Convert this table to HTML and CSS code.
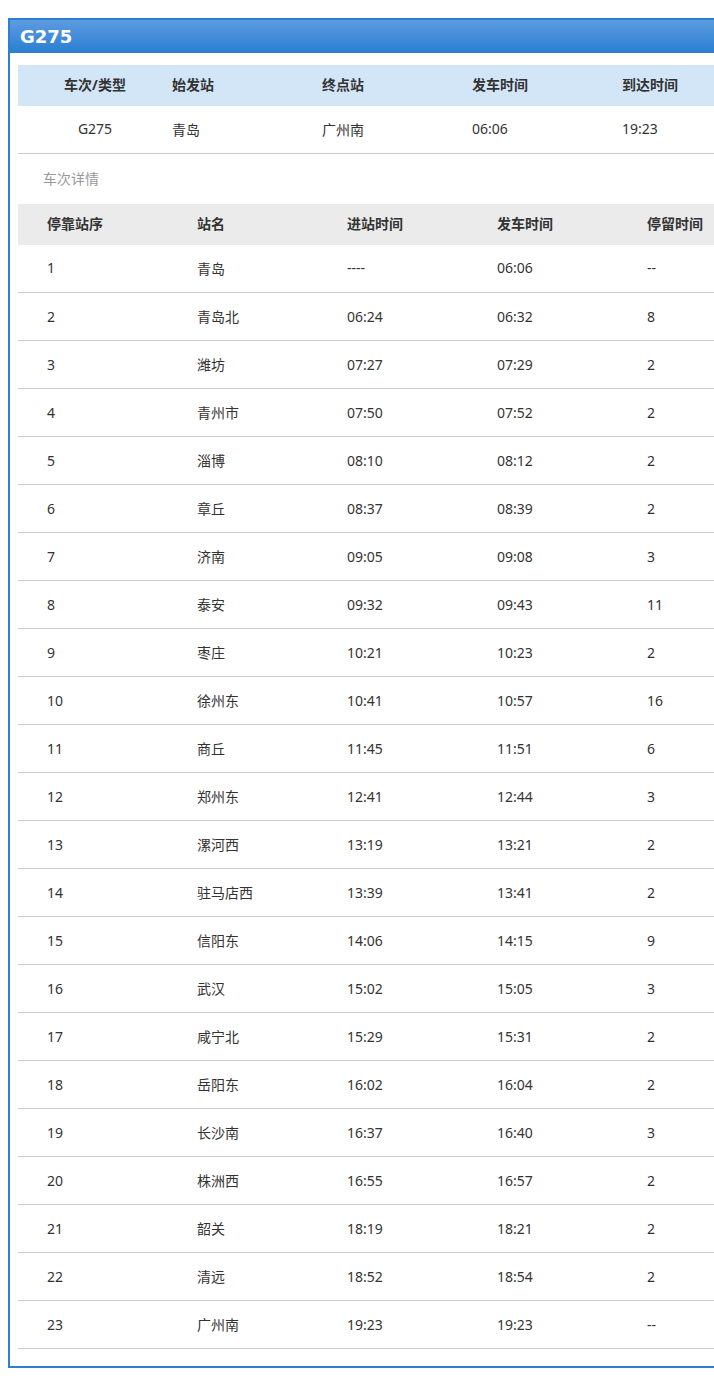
FILE: index.html
```html
<!DOCTYPE html>
<html lang="zh-CN">
<head>
<meta charset="UTF-8"/>
<title>G275 时刻表</title>
<link rel="stylesheet" href="styles.css">
</head>
<body>
<div class="panel">
  <div class="panel-hd">G275</div>
  <div class="panel-bd">
    <table class="info">
      <thead>
        <tr><th class="c1">车次/类型</th><th>始发站</th><th>终点站</th><th>发车时间</th><th>到达时间</th></tr>
      </thead>
      <tbody>
        <tr><td class="c1">G275</td><td>青岛</td><td>广州南</td><td>06:06</td><td>19:23</td></tr>
      </tbody>
    </table>
    <p class="label">车次详情</p>
    <table class="stops">
      <thead>
        <tr><th>停靠站序</th><th>站名</th><th>进站时间</th><th>发车时间</th><th>停留时间</th></tr>
      </thead>
      <tbody>
        <tr><td>1</td><td>青岛</td><td>----</td><td>06:06</td><td>--</td></tr>
        <tr><td>2</td><td>青岛北</td><td>06:24</td><td>06:32</td><td>8</td></tr>
        <tr><td>3</td><td>潍坊</td><td>07:27</td><td>07:29</td><td>2</td></tr>
        <tr><td>4</td><td>青州市</td><td>07:50</td><td>07:52</td><td>2</td></tr>
        <tr><td>5</td><td>淄博</td><td>08:10</td><td>08:12</td><td>2</td></tr>
        <tr><td>6</td><td>章丘</td><td>08:37</td><td>08:39</td><td>2</td></tr>
        <tr><td>7</td><td>济南</td><td>09:05</td><td>09:08</td><td>3</td></tr>
        <tr><td>8</td><td>泰安</td><td>09:32</td><td>09:43</td><td>11</td></tr>
        <tr><td>9</td><td>枣庄</td><td>10:21</td><td>10:23</td><td>2</td></tr>
        <tr><td>10</td><td>徐州东</td><td>10:41</td><td>10:57</td><td>16</td></tr>
        <tr><td>11</td><td>商丘</td><td>11:45</td><td>11:51</td><td>6</td></tr>
        <tr><td>12</td><td>郑州东</td><td>12:41</td><td>12:44</td><td>3</td></tr>
        <tr><td>13</td><td>漯河西</td><td>13:19</td><td>13:21</td><td>2</td></tr>
        <tr><td>14</td><td>驻马店西</td><td>13:39</td><td>13:41</td><td>2</td></tr>
        <tr><td>15</td><td>信阳东</td><td>14:06</td><td>14:15</td><td>9</td></tr>
        <tr><td>16</td><td>武汉</td><td>15:02</td><td>15:05</td><td>3</td></tr>
        <tr><td>17</td><td>咸宁北</td><td>15:29</td><td>15:31</td><td>2</td></tr>
        <tr><td>18</td><td>岳阳东</td><td>16:02</td><td>16:04</td><td>2</td></tr>
        <tr><td>19</td><td>长沙南</td><td>16:37</td><td>16:40</td><td>3</td></tr>
        <tr><td>20</td><td>株洲西</td><td>16:55</td><td>16:57</td><td>2</td></tr>
        <tr><td>21</td><td>韶关</td><td>18:19</td><td>18:21</td><td>2</td></tr>
        <tr><td>22</td><td>清远</td><td>18:52</td><td>18:54</td><td>2</td></tr>
        <tr><td>23</td><td>广州南</td><td>19:23</td><td>19:23</td><td>--</td></tr>
      </tbody>
    </table>
  </div>
</div>
</body>
</html>
```

FILE: styles.css
```css
*{box-sizing:border-box}
html,body{overflow:hidden}
body{margin:0;padding:18px 0 0 8px;background:#fff;font-family:'Noto Sans','Noto Sans CJK SC',sans-serif;font-size:14px;color:#333;width:800px}
.panel{border:2px solid #2e7fd0;width:780px}
.panel-hd{height:33px;line-height:33px;padding-left:10px;background:linear-gradient(#5c9ce0,#2a7ed2);color:#fff;font-family:'DejaVu Sans',sans-serif;font-weight:bold;font-size:18px}
.panel-bd{padding:12px 0 17px 8px}
table{border-collapse:collapse;table-layout:fixed}
th,td{text-align:left;padding:0;white-space:nowrap}
th{font-weight:bold;height:41px;padding-bottom:3px}
td{padding-bottom:1px}
.info{width:754px}
.info th{background:#d3e6f7}
.info th,.info td{width:150px}
.info .c1{width:154px;text-align:center}
.info td{height:47px;border-bottom:1px solid #cdcdcd}
.label{margin:0;height:50px;line-height:50px;padding-left:25px;color:#999}
.stops{width:750px}
.stops th{background:#ebebeb}
.stops th,.stops td{width:150px;padding-left:29px}
.stops td{height:48px;border-bottom:1px solid #cdcdcd}
```
